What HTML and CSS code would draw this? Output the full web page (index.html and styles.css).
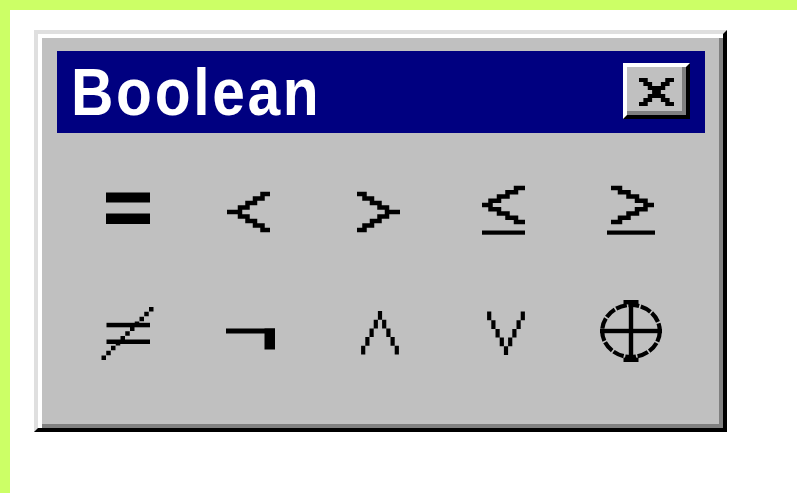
FILE: index.html
```html
<!DOCTYPE html>
<html lang="en">
<head>
<meta charset="utf-8">
<title>Boolean</title>
<link rel="stylesheet" href="styles.css">
</head>
<body>
<div class="page">
  <div class="palette">
    <div class="caption">
      <span class="caption-title">Boolean</span>
      <button class="caption-close" type="button" aria-label="Close">
        <svg width="35" height="28" viewBox="0 0 8 7" preserveAspectRatio="none">
          <path d="M0 0h2v1h-2z M6 0h2v1h-2z M1 1h2v1h-2z M5 1h2v1h-2z M2 2h4v1h-4z M3 3h2v1h-2z M2 4h4v1h-4z M1 5h2v1h-2z M5 5h2v1h-2z M0 6h2v1h-2z M6 6h2v1h-2z" fill="#000"/>
        </svg>
      </button>
    </div>
    <div class="ops">
      <!-- equal -->
      <div class="op" title="=">
        <svg viewBox="0 0 70 70" width="70" height="70">
          <rect x="12" y="17.5" width="44" height="10" fill="#000"/>
          <rect x="12" y="38.5" width="44" height="10.5" fill="#000"/>
        </svg>
      </div>
      <!-- less than -->
      <div class="op" title="&lt;">
        <svg viewBox="0 0 70 70" width="70" height="70">
          <path class="stroke" d="M7 37H20V32.5H27.5V28H35V23.5H42.5V19H50 M20 37V41.5H27.5V46H35V50.5H42.5V55H50"/>
        </svg>
      </div>
      <!-- greater than -->
      <div class="op" title="&gt;">
        <svg viewBox="0 0 70 70" width="70" height="70">
          <path class="stroke" d="M54 37H41V32.5H33.5V28H26V23.5H18.5V19H11 M41 37V41.5H33.5V46H26V50.5H18.5V55H11"/>
        </svg>
      </div>
      <!-- less or equal -->
      <div class="op" title="&le;">
        <svg viewBox="0 0 70 70" width="70" height="70">
          <path class="stroke" d="M10 30H18.5V25.75H27V21.5H35.5V17.25H44V13H53 M18.5 30V34.25H27V38.5H35.5V42.75H44V47H53"/>
          <rect x="10" y="55.5" width="43" height="4.2" fill="#000"/>
        </svg>
      </div>
      <!-- greater or equal -->
      <div class="op" title="&ge;">
        <svg viewBox="0 0 70 70" width="70" height="70">
          <path class="stroke" d="M10 30H18.5V25.75H27V21.5H35.5V17.25H44V13H53 M18.5 30V34.25H27V38.5H35.5V42.75H44V47H53" transform="matrix(-1 0 0 1 66 0)"/>
          <rect x="9" y="55.5" width="48" height="4.2" fill="#000"/>
        </svg>
      </div>
      <!-- not equal -->
      <div class="op" title="&ne;">
        <svg viewBox="0 0 70 70" width="70" height="70">
          <rect x="12.5" y="27.8" width="43.5" height="4.5" fill="#000"/>
          <rect x="12.5" y="44.5" width="43.5" height="4.5" fill="#000"/>
          <path fill="#000" d="M7.5 60.5h4.5v4.5h-4.5z m4.75 -4.85h4.5v4.5h-4.5z m4.75 -4.85h4.5v4.5h-4.5z m4.75 -4.85h4.5v4.5h-4.5z m4.75 -4.85h4.5v4.5h-4.5z m4.75 -4.85h4.5v4.5h-4.5z m4.75 -4.85h4.5v4.5h-4.5z m4.75 -4.85h4.5v4.5h-4.5z m4.75 -4.85h4.5v4.5h-4.5z m4.75 -4.85h4.5v4.5h-4.5z m4.75 -4.85h4.5v4.5h-4.5z"/>
        </svg>
      </div>
      <!-- not -->
      <div class="op" title="&not;">
        <svg viewBox="0 0 70 70" width="70" height="70">
          <rect x="6" y="33.5" width="49" height="5" fill="#000"/>
          <rect x="44.5" y="33.5" width="10.5" height="21" fill="#000"/>
        </svg>
      </div>
      <!-- and -->
      <div class="op" title="&and;">
        <svg viewBox="0 0 70 70" width="70" height="70">
          <path fill="#000" d="M31.9 16h4.2v8.7h-4.2z M27.7 24.7h4.2v8.7h-4.2z M36.1 24.7h4.2v8.7h-4.2z M23.5 33.4h4.2v8.7h-4.2z M40.3 33.4h4.2v8.7h-4.2z M19.3 42.1h4.2v8.7h-4.2z M44.5 42.1h4.2v8.7h-4.2z M15.1 50.8h4.2v8.7h-4.2z M48.7 50.8h4.2v8.7h-4.2z"/>
        </svg>
      </div>
      <!-- or -->
      <div class="op" title="&or;">
        <svg viewBox="0 0 70 70" width="70" height="70">
          <path fill="#000" d="M15.1 16.5h4.2v8.7h-4.2z M48.7 16.5h4.2v8.7h-4.2z M19.3 25.2h4.2v8.7h-4.2z M44.5 25.2h4.2v8.7h-4.2z M23.5 33.9h4.2v8.7h-4.2z M40.3 33.9h4.2v8.7h-4.2z M27.7 42.6h4.2v8.7h-4.2z M36.1 42.6h4.2v8.7h-4.2z M31.9 51.3h4.2v8.7h-4.2z"/>
        </svg>
      </div>
      <!-- exclusive or -->
      <div class="op" title="&oplus;">
        <svg viewBox="0 0 70 70" width="70" height="70">
          <ellipse cx="33" cy="36" rx="28.8" ry="26" fill="none" stroke="#000" stroke-width="4.2" stroke-dasharray="11 1.6"/>
          <rect x="2" y="33.8" width="62" height="4.4" fill="#000"/>
          <rect x="30.8" y="5" width="4.4" height="62" fill="#000"/>
          <rect x="25.5" y="5" width="15" height="4.4" fill="#000"/>
          <rect x="25.5" y="62.6" width="15" height="4.4" fill="#000"/>
        </svg>
      </div>
    </div>
  </div>
</div>
</body>
</html>
```
FILE: styles.css
```css
html,
body {
  margin: 0;
  height: 100%;
}

body {
  background: #ccff66;
  overflow: hidden;
}

/* white work area inside the lime frame */
.page {
  margin: 10px 0 0 10px;
  height: calc(100vh - 10px);
  box-sizing: border-box;
  padding: 20px 0 0 24px;
  background: #fff;
}

/* floating tool palette, classic 3D bevel */
.palette {
  width: 693px;
  height: 402px;
  box-sizing: border-box;
  padding: 16.5px 18px 0 19px;
  background: #c0c0c0;
  border: 4px solid;
  border-color: #dfdfdf #000 #000 #dfdfdf;
  box-shadow: inset 4px 4px 0 #fff, inset -4px -4px 0 #808080;
}

.caption {
  height: 82px;
  display: flex;
  align-items: center;
  justify-content: space-between;
  padding: 0 15px 0 14px;
  background: #000080;
}

.caption-title {
  display: inline-block;
  color: #fff;
  font-family: "Liberation Sans", Arial, sans-serif;
  font-weight: bold;
  font-size: 66px;
  line-height: 1;
  letter-spacing: 3px;
  transform: scaleX(0.89);
  transform-origin: left center;
}

.caption-close {
  align-self: flex-start;
  margin-top: 12px;
  width: 67px;
  height: 56px;
  padding: 3px 0 0;
  display: flex;
  align-items: center;
  justify-content: center;
  background: #c0c0c0;
  border: 4px solid;
  border-color: #fff #000 #000 #fff;
  box-shadow: inset -4px -4px 0 #808080;
  box-sizing: border-box;
}

.ops {
  display: grid;
  grid-template-columns: repeat(5, 126px);
  grid-auto-rows: 120px;
  justify-content: center;
  margin-top: 17.5px;
}

.op {
  display: flex;
  align-items: center;
  justify-content: center;
}

.op svg {
  display: block;
}

.stroke {
  fill: none;
  stroke: #000;
  stroke-width: 4.5;
  stroke-linejoin: miter;
  stroke-linecap: butt;
}
```
